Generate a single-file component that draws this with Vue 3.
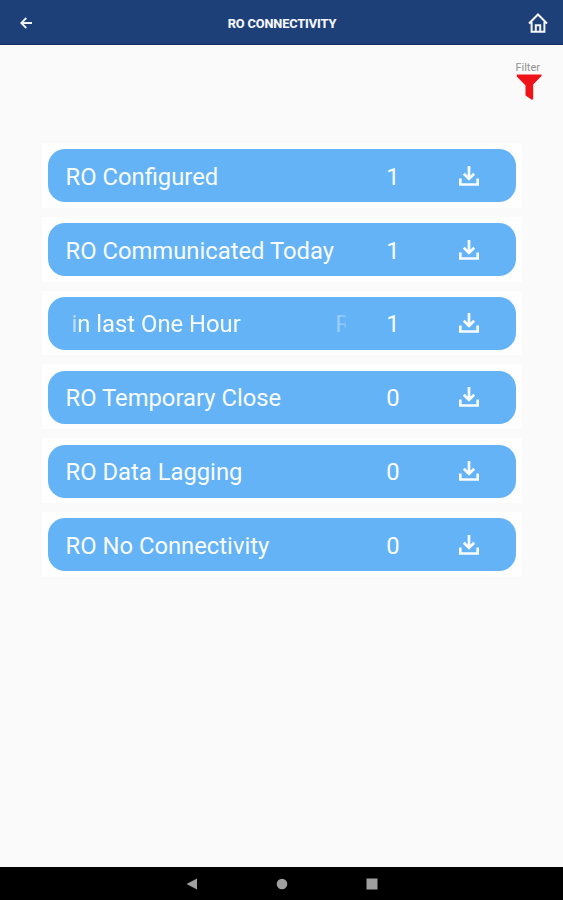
<script setup>
import { ref } from "vue"

const roList = ref([
  { label: "RO Configured", count: 1 },
  { label: "RO Communicated Today", count: 1 },
  { label: "in last One Hour", next: "R", count: 1 },
  { label: "RO Temporary Close", count: 0 },
  { label: "RO Data Lagging", count: 0 },
  { label: "RO No Connectivity", count: 0 },
])
</script>

<template>
  <div class="screen">
    <header class="topbar">
      <svg class="back" viewBox="0 0 12 12">
        <path d="M12 6H1.5M6.3 1L1.3 6l5 5" />
      </svg>
      <h1>RO CONNECTIVITY</h1>
      <svg class="home" viewBox="0 0 20 20">
        <path d="M1 10.5L10 1.5l9 9M3.6 9v9.8h12.8V9M7.8 19v-6.8h4.4v6.8" />
      </svg>
    </header>

    <main>
      <div class="filter">
        <span>Filter</span>
        <svg viewBox="0 0 26 26">
          <path d="M0.8 0.5h24.7v1.5l-8.3 8.5v15h-1.8l-5.9-4V11.5L0.8 2.5z" />
        </svg>
      </div>

      <div class="list">
        <div class="frame" v-for="item in roList" :key="item.label">
          <div class="card">
            <div class="label" :class="{ marquee: item.next }">
              <span>{{ item.label }}</span>
              <span v-if="item.next">{{ item.next }}</span>
            </div>
            <span class="count">{{ item.count }}</span>
            <svg class="download" viewBox="0 0 20 20">
              <path d="M10 0v13M4.8 7.7l5.2 5.2 5.2-5.2M1.3 12.5v6h17.4v-6" />
            </svg>
          </div>
        </div>
      </div>
    </main>

    <nav class="navbar">
      <svg viewBox="0 0 12 12"><path d="M0.5 6L11 0.5v11z" /></svg>
      <svg viewBox="0 0 12 12"><circle cx="6" cy="6" r="5.3" /></svg>
      <svg viewBox="0 0 12 12"><path d="M0.5 0.5h11v11h-11z" /></svg>
    </nav>
  </div>
</template>

<style>
body {
  background-color: #fafafa;
}
</style>

<style scoped>
.screen {
  display: flex;
  flex-direction: column;
  height: 900px;
  font-family: Roboto, sans-serif;
  background-color: #fafafa;
}

.topbar {
  display: flex;
  align-items: center;
  justify-content: space-between;
  box-sizing: border-box;
  height: 45px;
  padding: 2px 15px 0 20px;
  background-color: #1e4079;
  border-bottom: 1px solid #143068;
}

.back {
  width: 12px;
  height: 12px;
  fill: none;
  stroke: #f0f4fb;
  stroke-width: 1.8;
}

h1 {
  margin: 0 0 0 4px;
  padding-top: 1px;
  font-size: 12.8px;
  font-weight: 800;
  line-height: 16px;
  letter-spacing: -0.15px;
  color: #f4f6fb;
}

.home {
  width: 20px;
  height: 20px;
  fill: none;
  stroke: #f4f6fb;
  stroke-width: 2;
}

main {
  flex: 1;
}

.filter {
  display: flex;
  flex-direction: column;
  align-items: flex-end;
  height: 98px;
  padding-right: 21px;
  box-sizing: border-box;
  padding-top: 16px;
}

.filter span {
  margin-right: 2px;
  font-size: 11px;
  line-height: 13px;
  color: #929292;
}

.filter svg {
  width: 26px;
  height: 26px;
  fill: #ee1318;
}

.list {
  display: flex;
  flex-direction: column;
  gap: 9px;
  padding: 0 41px 0 42px;
}

.frame {
  box-sizing: border-box;
  height: 64.8px;
  padding: 6.4px 6px 5.4px;
  background-color: #fefefe;
}

.card {
  display: flex;
  align-items: center;
  box-sizing: border-box;
  height: 53px;
  padding-left: 18px;
  border-radius: 17px;
  font-size: 23.8px;
  color: #f9fcff;
  background-color: #64b3f6;
}

.label {
  width: 280px;
  padding-top: 2px;
  overflow: hidden;
  white-space: nowrap;
  text-indent: -0.5px;
}

.marquee {
  display: flex;
  justify-content: space-between;
  box-sizing: border-box;
  padding-left: 6px;
  -webkit-mask-image: linear-gradient(to right, transparent, #000 14px, #000 250px, transparent 286px);
  mask-image: linear-gradient(to right, transparent, #000 14px, #000 250px, transparent 286px);
}

.marquee span:last-child {
  width: 10px;
}

.count {
  width: 94px;
  padding-top: 2px;
  text-align: center;
}

.download {
  width: 20px;
  height: 20px;
  margin-left: 19px;
  fill: none;
  stroke: #f9fcff;
  stroke-width: 2.7;
}

.navbar {
  display: flex;
  align-items: center;
  justify-content: center;
  gap: 78px;
  height: 33px;
  background-color: #000;
}

.navbar svg {
  width: 12px;
  height: 12px;
  fill: #a0a0a0;
}
</style>
